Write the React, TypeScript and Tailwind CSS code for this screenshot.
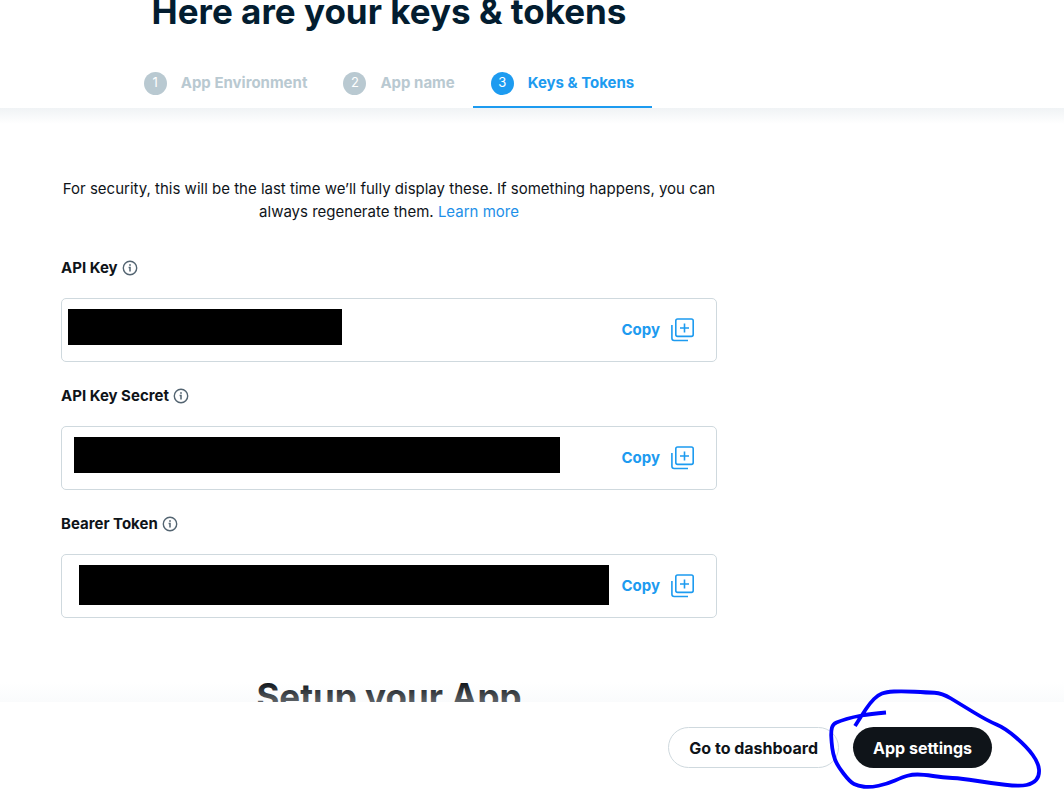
import React from "react";

type Step = { number: number; label: string; active?: boolean };

const steps: Step[] = [
  { number: 1, label: "App Environment" },
  { number: 2, label: "App name" },
  { number: 3, label: "Keys & Tokens", active: true },
];

type Credential = { id: string; label: string; bar: string };

const credentials: Credential[] = [
  { id: "api-key", label: "API Key", bar: "ml-1.5 h-9 w-[274px]" },
  { id: "api-secret", label: "API Key Secret", bar: "ml-3 h-9 w-[486px]" },
  { id: "bearer", label: "Bearer Token", bar: "ml-[17px] h-10 w-[530px]" },
];

const markPoints: [number, number][] = [
  [62, 32.5], [46, 34], [29, 37], [16, 41], [9, 44], [7, 51], [7.5, 62], [9, 74], [13, 85],
  [26, 102], [34, 106], [46, 107.5], [63, 104], [79, 97], [88, 94.5], [99, 94.5], [119, 97.5],
  [138, 98.5], [166, 103], [196, 106.5], [209, 103.5], [215.5, 96], [214.5, 83], [203, 67],
  [181, 48], [164, 41], [136, 24], [118, 13], [103, 12.5], [78, 11], [62, 12], [54, 15], [46, 23],
  [38, 35], [31, 46],
];

// Joins the points through their midpoints so that the pen line stays smooth.
function smoothPath(points: [number, number][]): string {
  let d = `M${points[0][0]} ${points[0][1]}`;
  for (let i = 1; i < points.length - 1; i++) {
    const [x, y] = points[i];
    const [nx, ny] = points[i + 1];
    d += ` Q${x} ${y} ${(x + nx) / 2} ${(y + ny) / 2}`;
  }
  const last = points[points.length - 1];
  return `${d} L${last[0]} ${last[1]}`;
}

function InfoIcon() {
  return (
    <svg className="size-4 text-[#536471]" viewBox="0 0 16 16" fill="none" aria-hidden="true">
      <circle cx="8" cy="8" r="6.7" stroke="currentColor" strokeWidth="1.4" />
      <rect x="7.2" y="4.2" width="1.6" height="1.6" fill="currentColor" />
      <path d="M6.6 7.4H8V11.6" stroke="currentColor" strokeWidth="1.5" />
    </svg>
  );
}

function CopyIcon() {
  return (
    <svg className="size-6" viewBox="0 0 24 24" fill="none" stroke="currentColor" strokeWidth="1.6" aria-hidden="true">
      <rect x="5.8" y="1" width="17.4" height="17.4" rx="1.8" />
      <path d="M14.5 5.5v9M10 10h9" />
      <path d="M1.9 7v13.3a2.2 2.2 0 0 0 2.2 2.2H18" />
    </svg>
  );
}

function StepTab({ step }: { step: Step }) {
  return (
    <a
      href={`#step-${step.number}`}
      aria-current={step.active ? "step" : undefined}
      className={
        step.active
          ? "flex h-[51px] items-center gap-3.5 border-b-2 border-[#1d9bf0] px-[18px] pt-[3px] text-[#1d9bf0]"
          : "flex h-[51px] items-center gap-3.5 border-b-2 border-transparent px-[18px] pt-[3px] text-[#b9c9d1]"
      }
    >
      <span
        className={
          step.active
            ? "flex size-[23px] items-center justify-center rounded-full bg-[#1d9bf0] text-[13px] text-white"
            : "flex size-[23px] items-center justify-center rounded-full bg-[#b9c9d1] text-[13px] text-white"
        }
      >
        {step.number}
      </span>
      <span className="text-[15px] font-bold whitespace-nowrap">{step.label}</span>
    </a>
  );
}

function CredentialField({ credential }: { credential: Credential }) {
  return (
    <section aria-labelledby={credential.id}>
      <div className="flex h-6 items-center gap-1">
        <h2 id={credential.id} className="text-[15px] font-bold">
          {credential.label}
        </h2>
        <InfoIcon />
      </div>
      <div className="mt-[18px] flex h-16 justify-between rounded-[5px] border border-[#cfd9de] pr-[22px]">
        <div className={`mt-2.5 bg-black ${credential.bar}`} />
        <button type="button" className="flex items-center gap-2.5 text-[15px] font-bold text-[#1d9bf0]">
          Copy
          <CopyIcon />
        </button>
      </div>
    </section>
  );
}

export default function App() {
  return (
    <div className="relative flex h-screen flex-col overflow-hidden bg-white font-['Inter','Liberation_Sans',sans-serif] text-[#0f1419]">
      <header className="shrink-0 pr-[286px]">
        <h1 className="h-[57px] text-center text-[35px] leading-[22px] font-bold whitespace-nowrap text-[#031d30]">
          Here are your keys &amp; tokens
        </h1>
        <nav aria-label="Setup steps" className="flex justify-center">
          {steps.map((step) => (
            <StepTab key={step.number} step={step} />
          ))}
        </nav>
      </header>

      <main className="relative min-h-0 flex-1 overflow-hidden pr-[286px]">
        <div className="absolute inset-x-0 top-0 h-4 bg-linear-to-b from-[#f0f3f5] to-transparent" />
        <div className="mx-auto max-w-[656px] pt-[69px]">
          <p className="text-center text-[15px] leading-[23px]">
            For security, this will be the last time we’ll fully display these. If something happens, you can always
            regenerate them.{" "}
            <a href="#learn-more" className="text-[#1d8fe8]">
              Learn more
            </a>
          </p>
          <div className="mt-[33px] flex flex-col gap-[22px]">
            {credentials.map((credential) => (
              <CredentialField key={credential.id} credential={credential} />
            ))}
          </div>
          <h2 className="mt-[58px] text-center text-[35px] leading-10 font-bold whitespace-nowrap">Setup your App</h2>
        </div>
        <div className="absolute inset-x-0 bottom-0 h-5 bg-linear-to-b from-transparent to-[#f0f4f7]/35" />
      </main>

      <footer className="flex shrink-0 justify-end gap-3.5 bg-white pt-[25px] pr-[72px] pb-[21px]">
        <button
          type="button"
          className="h-[41px] rounded-full border border-[#cfd9de] px-5 text-base font-bold whitespace-nowrap"
        >
          Go to dashboard
        </button>
        <button
          type="button"
          className="h-[41px] rounded-full bg-[#0f1419] px-5 text-base font-bold whitespace-nowrap text-white"
        >
          App settings
        </button>
      </footer>

      <svg
        className="pointer-events-none absolute right-0 bottom-0 h-[109px] w-60"
        viewBox="0 0 240 109"
        fill="none"
        aria-hidden="true"
      >
        <path d={smoothPath(markPoints)} stroke="#0000ff" strokeWidth="3.8" strokeLinejoin="round" />
      </svg>
    </div>
  );
}
